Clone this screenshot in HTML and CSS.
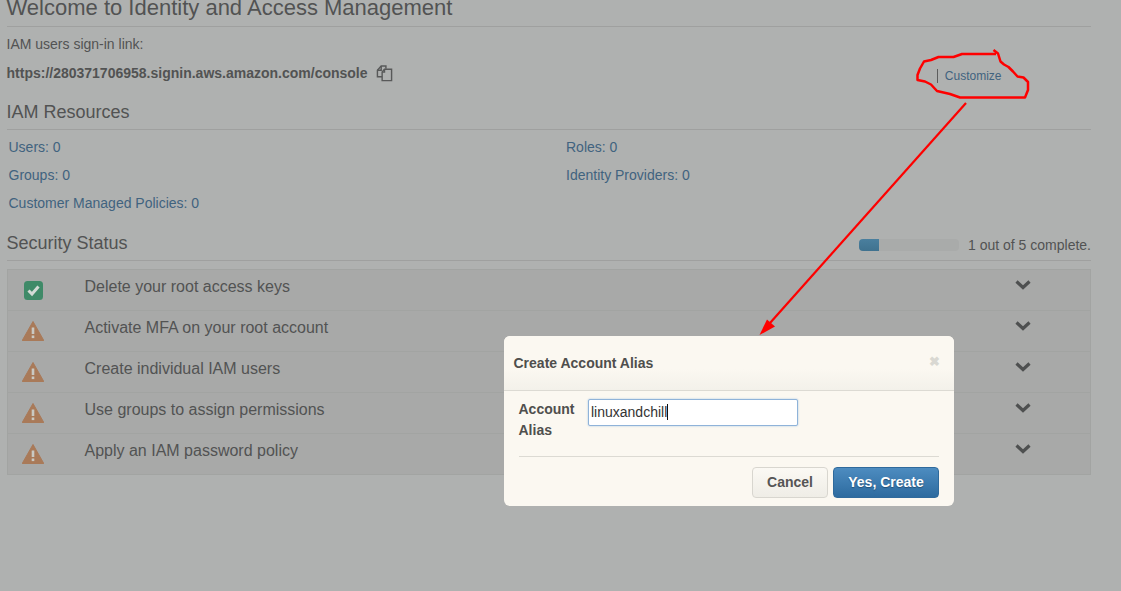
FILE: index.html
```html
<!DOCTYPE html>
<html lang="en">
<head>
  <meta charset="UTF-8" />
  <title>Identity and Access Management</title>
  <link rel="stylesheet" href="styles.css">
</head>
<body>

<div id="page">
  <h1 class="page-title">Welcome to Identity and Access Management</h1>

  <p class="signin-label">IAM users sign-in link:</p>
  <div class="signin-row">
    <strong class="signin-url">https://280371706958.signin.aws.amazon.com/console</strong>
    <svg class="copy-icon" width="17" height="17" viewBox="0 0 18 18" fill="none" stroke="#585959" stroke-width="1.5">
      <path d="M6.5 12.5H1.5V5.5L5.5 1H10.5V4" />
      <path d="M5.5 1V5.5H1.5" />
      <path d="M9 4.5H16.5V16.5H6.5V7.5Z" />
      <path d="M9 4.5V7.5H6.5" />
    </svg>
    <span class="customize"><a href="#">Customize</a></span>
  </div>

  <h2 class="section-title">IAM Resources</h2>
  <div class="resources">
    <a href="#">Users: 0</a>
    <a href="#">Roles: 0</a>
    <a href="#">Groups: 0</a>
    <a href="#">Identity Providers: 0</a>
    <a href="#">Customer Managed Policies: 0</a>
  </div>

  <div class="status-head">
    <h2>Security Status</h2>
    <div class="progress"><div class="progress-fill"></div></div>
    <span class="progress-text">1 out of 5 complete.</span>
  </div>

  <div class="status-list">
    <div class="status-row">
      <span class="status-icon">
        <svg width="19" height="19" viewBox="0 0 19 19"><rect width="19" height="19" rx="3.5" fill="#3f8a68"/><path d="M4.5 9.5L8 13L14.5 5.5" fill="none" stroke="#d3dad5" stroke-width="3"/></svg>
      </span>
      <span class="status-text">Delete your root access keys</span>
      <svg class="chevron" width="16" height="11" viewBox="0 0 16 11"><path d="M1.5 2.5L8 8.5L14.5 2.5" fill="none" stroke="#4e5050" stroke-width="3.2"/></svg>
    </div>
    <div class="status-row">
      <span class="status-icon">
        <svg width="22" height="20" viewBox="0 0 22 20"><path d="M11 0.5L21.8 19.5H0.2Z" fill="#a97a59" stroke="#a97a59" stroke-linejoin="round"/><rect x="9.7" y="6.5" width="2.6" height="6.5" fill="#c9c9c3"/><rect x="9.7" y="14.5" width="2.6" height="2.6" fill="#c9c9c3"/></svg>
      </span>
      <span class="status-text">Activate MFA on your root account</span>
      <svg class="chevron" width="16" height="11" viewBox="0 0 16 11"><path d="M1.5 2.5L8 8.5L14.5 2.5" fill="none" stroke="#4e5050" stroke-width="3.2"/></svg>
    </div>
    <div class="status-row">
      <span class="status-icon">
        <svg width="22" height="20" viewBox="0 0 22 20"><path d="M11 0.5L21.8 19.5H0.2Z" fill="#a97a59" stroke="#a97a59" stroke-linejoin="round"/><rect x="9.7" y="6.5" width="2.6" height="6.5" fill="#c9c9c3"/><rect x="9.7" y="14.5" width="2.6" height="2.6" fill="#c9c9c3"/></svg>
      </span>
      <span class="status-text">Create individual IAM users</span>
      <svg class="chevron" width="16" height="11" viewBox="0 0 16 11"><path d="M1.5 2.5L8 8.5L14.5 2.5" fill="none" stroke="#4e5050" stroke-width="3.2"/></svg>
    </div>
    <div class="status-row">
      <span class="status-icon">
        <svg width="22" height="20" viewBox="0 0 22 20"><path d="M11 0.5L21.8 19.5H0.2Z" fill="#a97a59" stroke="#a97a59" stroke-linejoin="round"/><rect x="9.7" y="6.5" width="2.6" height="6.5" fill="#c9c9c3"/><rect x="9.7" y="14.5" width="2.6" height="2.6" fill="#c9c9c3"/></svg>
      </span>
      <span class="status-text">Use groups to assign permissions</span>
      <svg class="chevron" width="16" height="11" viewBox="0 0 16 11"><path d="M1.5 2.5L8 8.5L14.5 2.5" fill="none" stroke="#4e5050" stroke-width="3.2"/></svg>
    </div>
    <div class="status-row">
      <span class="status-icon">
        <svg width="22" height="20" viewBox="0 0 22 20"><path d="M11 0.5L21.8 19.5H0.2Z" fill="#a97a59" stroke="#a97a59" stroke-linejoin="round"/><rect x="9.7" y="6.5" width="2.6" height="6.5" fill="#c9c9c3"/><rect x="9.7" y="14.5" width="2.6" height="2.6" fill="#c9c9c3"/></svg>
      </span>
      <span class="status-text">Apply an IAM password policy</span>
      <svg class="chevron" width="16" height="11" viewBox="0 0 16 11"><path d="M1.5 2.5L8 8.5L14.5 2.5" fill="none" stroke="#4e5050" stroke-width="3.2"/></svg>
    </div>
  </div>
</div>

<!-- Red hand-drawn annotation on top of the screenshot -->
<svg class="annotation" width="1121" height="591" viewBox="0 0 1121 591" fill="none" stroke="#fe0000" stroke-width="2.5" stroke-linejoin="round">
  <path d="M993.5 50L998 53.5L1000.5 61.5L1004 64.5L1008.5 67L1013 71.5L1017.5 76.5L1023.5 77.5L1028 82L1028 90L1025 97.5H960L950 94L937 91L931 84.5L925 81.5L917.5 80V75L920 68.5L924 61.5L931 60L938.5 57H953.5L962 54H996" />
  <path d="M966 103L770 323" stroke-width="2.2" />
  <path d="M759.5 335L767 319.5L775 326.5Z" fill="#fe0000" stroke="none" />
</svg>

<div class="modal">
  <div class="modal-head">
    <h3>Create Account Alias</h3>
    <span class="modal-close">&#10006;</span>
  </div>
  <div class="modal-body">
    <div class="form-row">
      <label class="form-label">Account Alias</label>
      <div class="fake-input"><span class="caret-text">linuxandchill</span></div>
    </div>
    <div class="modal-foot">
      <button class="btn btn-cancel">Cancel</button>
      <button class="btn btn-primary">Yes, Create</button>
    </div>
  </div>
</div>

</body>
</html>
```

FILE: styles.css
```css
html, body {
  height: 100%;
}

body {
  margin: 0;
  overflow: hidden;
  font-family: "Liberation Sans", Arial, sans-serif;
  font-size: 14px;
  color: #525353;
  background-color: #afb1b0;
}

a {
  color: #41637f;
  text-decoration: none;
}

#page {
  width: 1084.5px;
  margin-left: 6.5px;
}

/* Headings */
.page-title {
  margin: -4px 0 0;
  height: 31px;
  box-sizing: border-box;
  border-bottom: 1px solid #9fa09f;
  font-size: 22px;
  line-height: 24px;
  font-weight: normal;
}

.section-title {
  margin: 0;
  height: 31px;
  box-sizing: border-box;
  border-bottom: 1px solid #9fa09f;
  font-size: 18px;
  line-height: 26px;
  font-weight: normal;
}

/* Sign-in link */
.signin-label {
  margin: 9px 0 0;
  line-height: 16px;
}

.signin-row {
  display: flex;
  align-items: center;
  height: 28px;
  margin-top: 7px;
}

.copy-icon {
  margin-left: 8.5px;
  margin-top: 1px;
}

.customize {
  margin-left: auto;
  margin-right: 89.5px;
  margin-top: 6px;
  padding-left: 7px;
  border-left: 1px solid #5c5d5d;
  font-size: 12px;
  line-height: 14px;
}

/* Resources */
.signin-row + .section-title {
  margin-top: 12px;
}

.resources {
  display: grid;
  grid-template-columns: 557.5px 1fr;
  grid-auto-rows: 28px;
  padding: 3px 0 0 2px;
  line-height: 28px;
}

/* Security status */
.status-head {
  display: flex;
  align-items: center;
  height: 31px;
  margin-top: 13px;
  box-sizing: border-box;
  border-bottom: 1px solid #9fa09f;
}

.status-head h2 {
  margin: -4px auto 0 0;
  font-size: 18px;
  font-weight: normal;
}

.progress {
  width: 100px;
  height: 12px;
  margin-right: 9px;
  border-radius: 4px;
  background-color: #a9abaa;
  overflow: hidden;
}

.progress-fill {
  width: 20px;
  height: 100%;
  background: linear-gradient(#4a7f9e, #3f728f);
}

.status-list {
  margin-top: 8px;
  margin-left: 0.5px;
  border: 1px solid #a2a4a2;
  background-color: #a8a9a8;
}

.status-row {
  display: flex;
  align-items: center;
  height: 40px;
  border-top: 1px solid #a2a4a2;
  font-size: 16px;
}

.status-row:first-child {
  border-top: 0;
}

.status-icon {
  display: flex;
  justify-content: center;
  width: 50px;
  margin-right: 26.5px;
}

.status-text {
  flex: 1;
  margin-top: -6px;
}

.chevron {
  margin-right: 59px;
  margin-top: -11px;
}

/* Annotation and dialog lie over the page */
.annotation {
  position: absolute;
  top: 0;
  left: 0;
}

.modal {
  position: absolute;
  top: 336px;
  left: 504px;
  width: 450px;
  height: 170px;
  border-radius: 6px;
  background-color: #fbf8f1;
  overflow: hidden;
}

.modal-head {
  display: flex;
  justify-content: space-between;
  align-items: center;
  height: 54px;
  padding: 0 14px 0 9.5px;
  border-bottom: 1px solid #dcdad3;
  background: linear-gradient(#fbf8f1 60%, #f3f1ea);
}

.modal-head h3 {
  margin: 0;
  font-size: 14px;
  color: #4f4f4d;
}

.modal-close {
  margin-top: -4px;
  font-size: 13px;
  font-weight: bold;
  color: #d9d8d2;
}

.modal-body {
  padding: 8px 15px 0 14.5px;
}

.form-row {
  display: flex;
  height: 57px;
  border-bottom: 1px solid #dcdad3;
}

.form-label {
  width: 69.5px;
  font-weight: bold;
  line-height: 21px;
  color: #4f4f4d;
}

.fake-input {
  width: 210px;
  height: 27px;
  box-sizing: border-box;
  padding: 4px 2px 0;
  border: 1px solid #8fb3d9;
  border-radius: 2px;
  box-shadow: 0 0 2px #9fc0e2;
  background-color: #fff;
  color: #333;
}

.caret-text {
  display: inline-block;
  height: 16px;
  line-height: 16px;
  border-right: 1.5px solid #111;
}

.modal-foot {
  display: flex;
  justify-content: flex-end;
  gap: 5px;
  margin-top: 10px;
}

.btn {
  height: 31px;
  border-radius: 4px;
  font-family: inherit;
  font-size: 14px;
  font-weight: bold;
  padding: 0 0 2px;
}

.btn-cancel {
  width: 76px;
  border: 1px solid #d8d6cf;
  background: linear-gradient(#fbf9f4, #efede6);
  color: #555;
}

.btn-primary {
  width: 106px;
  border: 1px solid #2f6a9c;
  background: linear-gradient(#4d8cc0, #2d6b9f);
  color: #fff;
  text-shadow: 0 1px 1px #234f75;
}
```
